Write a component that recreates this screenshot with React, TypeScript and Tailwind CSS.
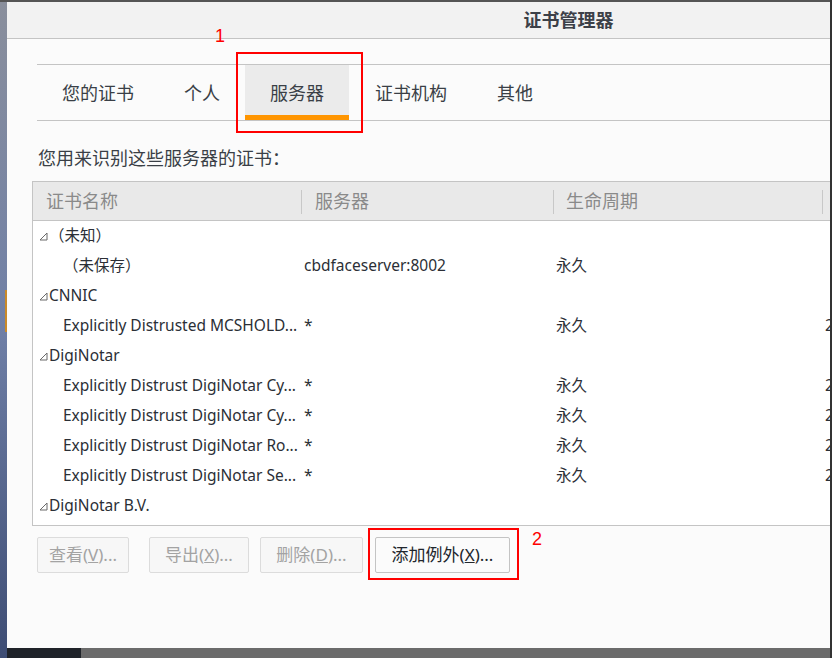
const font = { fontFamily: '"Segoe UI", "Noto Sans", "Noto Sans CJK SC", sans-serif' };

type Row = { name: string; server?: string; life?: string; extra?: string; group?: boolean };

const rows: Row[] = [
  { name: '（未知）', group: true },
  { name: '（未保存）', server: 'cbdfaceserver:8002', life: '永久' },
  { name: 'CNNIC', group: true },
  { name: 'Explicitly Distrusted MCSHOLD...', server: '*', life: '永久', extra: '2' },
  { name: 'DigiNotar', group: true },
  { name: 'Explicitly Distrust DigiNotar Cy...', server: '*', life: '永久', extra: '2' },
  { name: 'Explicitly Distrust DigiNotar Cy...', server: '*', life: '永久', extra: '2' },
  { name: 'Explicitly Distrust DigiNotar Ro...', server: '*', life: '永久', extra: '2' },
  { name: 'Explicitly Distrust DigiNotar Se...', server: '*', life: '永久', extra: '2' },
  { name: 'DigiNotar B.V.', group: true },
];

const Tri = () => (
  <svg width="9" height="9" viewBox="0 0 9 9" className="mr-[1px] shrink-0">
    <path d="M1 8 L8 8 L8 1 Z" fill="none" stroke="#6b6b6b" strokeWidth="1" />
  </svg>
);

export default function App() {
  return (
    <div className="relative w-[832px] h-[658px] overflow-hidden bg-[#6b6b6b]" style={font}>
      {/* desktop behind */}
      <div className="absolute left-0 top-0 w-[7px] h-[658px] bg-gradient-to-b from-[#8a8f9c] via-[#6f7fa6] to-[#3e4d74]" />
      <div className="absolute left-[5px] top-[290px] w-[2px] h-[42px] bg-[#c98a2a]" />
      <div className="absolute left-0 top-0 w-[832px] h-[2px] bg-[#555]" />
      <div className="absolute left-[7px] top-[648px] w-[74px] h-[10px] bg-[#1f2329]" />
      <div className="absolute left-[830px] top-0 w-[2px] h-[658px] bg-[#333]" />

      {/* window */}
      <div className="absolute left-[7px] top-[2px] w-[823px] h-[646px] overflow-hidden bg-[#fbfbfb] flex flex-col">
        <div className="h-[37px] shrink-0 bg-[#f2f2f2] border-b border-[#c4c4c4] flex items-center justify-center pl-[300px] pt-[1px]">
          <span className="text-[18px] font-bold text-[#3c4048]">证书管理器</span>
        </div>

        <div className="pl-[30px]">
          {/* tabs */}
          <div className="mt-[25px] h-[57px] border-y border-[#c4c4c4] flex items-stretch text-[18px] text-[#3a3f46]">
            <div className="ml-[25px] flex items-center pt-[2px]">您的证书</div>
            <div className="ml-[50px] flex items-center pt-[2px]">个人</div>
            <div className="ml-[25px] w-[104px] bg-[#ebebeb] relative flex items-center justify-center pt-[2px]">
              服务器
              <div className="absolute left-0 right-0 bottom-0 h-[5px] bg-[#ff9500]" />
            </div>
            <div className="ml-[26px] flex items-center pt-[2px]">证书机构</div>
            <div className="ml-[50px] flex items-center pt-[2px]">其他</div>
          </div>

          <div
            className="mt-[25px] text-[18px] text-[#3a3f46] pl-[1px] leading-[22px]"
            style={{ fontFamily: '"Noto Sans CJK SC", sans-serif' }}
          >
            您用来识别这些服务器的证书：
          </div>

          {/* table */}
          <div className="mt-[13px] -ml-[5px] w-[900px] h-[345px] border border-[#c4c4c4] bg-white">
            <div className="h-[39px] bg-[#e9e9e9] border-b border-[#c4c4c4] flex items-center text-[18px] text-[#8a8a8a] pt-[1px]">
              <div className="w-[268px] pl-[13px]">证书名称</div>
              <div className="w-[252px] pl-[13px] border-l border-[#c8c8c8] h-[24px] flex items-center">服务器</div>
              <div className="w-[269px] pl-[12px] border-l border-[#c8c8c8] h-[24px] flex items-center">生命周期</div>
              <div className="flex-1 border-l border-[#c8c8c8] h-[24px]" />
            </div>
            <div>
              {rows.map((r, i) => (
                <div key={i} className="h-[30px] flex items-center text-[15.5px] text-[#2b2f36]">
                  {r.group ? (
                    <div className="pl-[6px] flex items-center">
                      <Tri />
                      <span>{r.name}</span>
                    </div>
                  ) : (
                    <>
                      <div className="w-[271px] pl-[30px] whitespace-nowrap">{r.name}</div>
                      <div className="w-[252px]">{r.server}</div>
                      <div className="w-[269px]">{r.life}</div>
                      <div>{r.extra}</div>
                    </>
                  )}
                </div>
              ))}
            </div>
          </div>

          {/* buttons */}
          <div className="mt-[11px] flex text-[17px]">
            <button className="h-[36px] w-[92px] border border-[#dcdcdc] rounded-[2px] text-[#a3a3a3] bg-[#f7f7f7]">
              查看(<span className="underline">V</span>)...
            </button>
            <button className="ml-[20px] h-[36px] w-[100px] border border-[#dcdcdc] rounded-[2px] text-[#a3a3a3] bg-[#f7f7f7]">
              导出(<span className="underline">X</span>)...
            </button>
            <button className="ml-[11px] h-[36px] w-[103px] border border-[#dcdcdc] rounded-[2px] text-[#a3a3a3] bg-[#f7f7f7]">
              删除(<span className="underline">D</span>)...
            </button>
            <button className="ml-[12px] h-[36px] w-[135px] border border-[#c4c4c4] rounded-[2px] text-[#22262c] bg-[#fbfbfb]">
              添加例外(<span className="underline">X</span>)...
            </button>
          </div>
        </div>
      </div>

      {/* annotations */}
      <div className="absolute left-[236px] top-[52px] w-[127px] h-[81px] border-2 border-[#ff0000]" />
      <div className="absolute left-[215px] top-[27px] text-[18px] text-[#ff0000] leading-none" style={{ fontFamily: '"Liberation Sans", sans-serif' }}>1</div>
      <div className="absolute left-[368px] top-[528px] w-[151px] h-[52px] border-2 border-[#ff0000]" />
      <div className="absolute left-[532px] top-[530px] text-[18px] text-[#ff0000] leading-none" style={{ fontFamily: '"Liberation Sans", sans-serif' }}>2</div>
    </div>
  );
}
